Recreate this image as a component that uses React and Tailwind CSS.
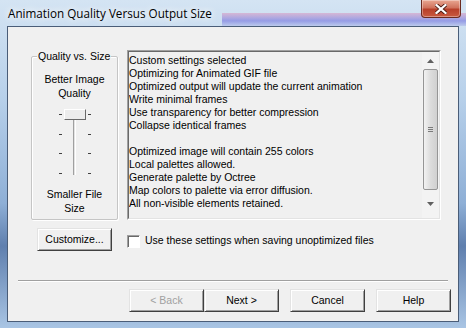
import React from "react";

const lines = [
  "Custom settings selected",
  "Optimizing for Animated GIF file",
  "Optimized output will update the current animation",
  "Write minimal frames",
  "Use transparency for better compression",
  "Collapse identical frames",
  "",
  "Optimized image will contain 255 colors",
  "Local palettes allowed.",
  "Generate palette by Octree",
  "Map colors to palette via error diffusion.",
  "All non-visible elements retained.",
];

const Button = ({ children, disabled, className = "" }) => (
  <button
    className={`flex h-[23px] w-[75px] items-center justify-center border border-t-[#e3e3e3] border-l-[#e3e3e3] border-r-[#404040] border-b-[#404040] bg-[#f0f0f0] shadow-[inset_1px_1px_0_#ffffff,inset_-1px_-1px_0_#a0a0a0] text-[10.5px] leading-none ${
      disabled ? "text-[#a0a0a0]" : "text-black"
    } ${className}`}
  >
    {children}
  </button>
);

const Tick = () => <span className="block h-px w-[3px] bg-[#404040]" />;

export default function App() {
  return (
    <div className="flex h-[328px] w-[466px] flex-col overflow-hidden bg-[linear-gradient(to_bottom,#d4e4f3,#b7d0ea_30%,#8eafd6_62%,#5f7fae_75%,#a9c5e4)] font-['Liberation_Sans',Arial,sans-serif]">
      {/* title bar */}
      <div className="relative flex h-[26px] shrink-0 items-center">
        <div className="absolute left-[222px] right-0 top-[13px] h-[13px] bg-[linear-gradient(to_bottom,#d9a6c8,#a491d8_35%,#7d7fe0_60%,#b4c1ea)] opacity-70" />
        <span className="relative ml-[8px] mt-[1px] text-[11.7px] text-black font-['Open_Sans','Noto_Sans',sans-serif] [text-shadow:0_0_6px_#ffffff,0_0_10px_#ffffff]">
          Animation Quality Versus Output Size
        </span>
        <div className="absolute left-[421px] top-0 flex h-[18px] w-[40px] items-center justify-center rounded-b-[4px] border border-t-0 border-[#6b2b20] bg-[linear-gradient(to_bottom,#e9a792,#d0735d_45%,#b8402a_55%,#c95a40)] shadow-[inset_0_0_0_1px_rgba(255,255,255,0.35)]">
          <svg width="12" height="10" viewBox="0 0 12 10">
            <path d="M1.5 1L10.5 9M10.5 1L1.5 9" stroke="#4a1a12" strokeWidth="4" strokeLinecap="square" />
            <path d="M1.5 1L10.5 9M10.5 1L1.5 9" stroke="#ffffff" strokeWidth="2.2" strokeLinecap="square" />
          </svg>
        </div>
      </div>

      {/* client area */}
      <div className="ml-[7px] h-[296px] w-[452px] border border-[#4a5d78] bg-[#f0f0f0] text-[10.5px] text-black">
        <div className="flex pl-[23px] pt-[23px]">
          {/* group box */}
          <div className="relative mt-[6px] flex h-[164px] w-[87px] flex-col items-center rounded-[2px] border border-[#c5c5c5] shadow-[inset_1px_1px_0_#ffffff,1px_1px_0_#ffffff] pt-[15px]">
            <span className="absolute -top-[8px] left-[5px] bg-[#f0f0f0] px-px leading-[14px]">Quality vs. Size</span>
            <div className="text-center leading-[14px]">
              Better Image
              <br />
              Quality
            </div>
            <div className="mt-[9px] flex h-[70px] gap-[2px]">
              <div className="flex flex-col justify-between py-[5px]">
                <Tick />
                <Tick />
                <Tick />
                <Tick />
              </div>
              <div className="relative flex w-[22px] justify-center">
                <div className="mt-[10px] h-[56px] w-[3px] border-l border-[#a0a0a0] bg-[#e3e3e3] border-r border-r-[#ffffff]" />
                <div className="absolute left-0 top-0 h-[11px] w-[22px] border border-t-[#ffffff] border-l-[#ffffff] border-r-[#696969] border-b-[#696969] bg-[#ececec]" />
              </div>
              <div className="flex flex-col justify-between py-[5px]">
                <Tick />
                <Tick />
                <Tick />
                <Tick />
              </div>
            </div>
            <div className="mt-[8px] text-center leading-[14px]">
              Smaller File
              <br />
              Size
            </div>
          </div>

          {/* info box */}
          <div className="ml-[9px] flex h-[170px] w-[314px] border border-t-[#a0a0a0] border-l-[#a0a0a0] border-r-[#ffffff] border-b-[#ffffff]">
            <div className="flex flex-1 border border-t-[#696969] border-l-[#696969] border-r-[#e3e3e3] border-b-[#e3e3e3]">
              <div className="flex-1 pt-[2px] leading-[13px] whitespace-nowrap overflow-hidden">
                {lines.map((l, i) => (
                  <div key={i} className="h-[13px]">
                    {l}
                  </div>
                ))}
              </div>
              <div className="flex w-[17px] flex-col items-center bg-[#f3f3f3]">
                <div className="flex h-[17px] w-full items-center justify-center">
                  <svg width="7" height="4" viewBox="0 0 7 4">
                    <path d="M0 4L3.5 0L7 4Z" fill="#606060" />
                  </svg>
                </div>
                <div className="flex h-[121px] w-[15px] items-center justify-center rounded-[2px] border border-[#959595] bg-[linear-gradient(to_right,#f2f2f2,#dcdcdc_50%,#d0d0d0)]">
                  <div className="flex flex-col gap-px">
                    <span className="block h-px w-[5px] bg-[#7a7a7a]" />
                    <span className="block h-px w-[5px] bg-[#7a7a7a]" />
                    <span className="block h-px w-[5px] bg-[#7a7a7a]" />
                  </div>
                </div>
                <div className="flex flex-1 w-full items-center justify-center">
                  <svg width="7" height="4" viewBox="0 0 7 4">
                    <path d="M0 0L3.5 4L7 0Z" fill="#606060" />
                  </svg>
                </div>
              </div>
            </div>
          </div>
        </div>

        {/* customize row */}
        <div className="mt-[8px] flex items-center pl-[29px]">
          <Button className="h-[23px] w-[75px]">Customize...</Button>
          <div className="ml-[15px] mt-[3px] flex items-center">
            <span className="block h-[13px] w-[13px] border border-t-[#a0a0a0] border-l-[#a0a0a0] border-r-[#ffffff] border-b-[#ffffff] bg-white shadow-[inset_1px_1px_0_#696969]" />
            <span className="ml-[5px]">Use these settings when saving unoptimized files</span>
          </div>
        </div>

        {/* separator */}
        <div className="mx-[10px] mt-[29px] h-[2px] border-t border-[#a0a0a0] border-b border-b-[#ffffff]" />

        {/* buttons */}
        <div className="mt-[7px] flex justify-end pr-[7px]">
          <Button disabled>&lt; Back</Button>
          <Button>Next &gt;</Button>
          <Button className="ml-[11px]">Cancel</Button>
          <Button className="ml-[11px]">Help</Button>
        </div>
      </div>
    </div>
  );
}
